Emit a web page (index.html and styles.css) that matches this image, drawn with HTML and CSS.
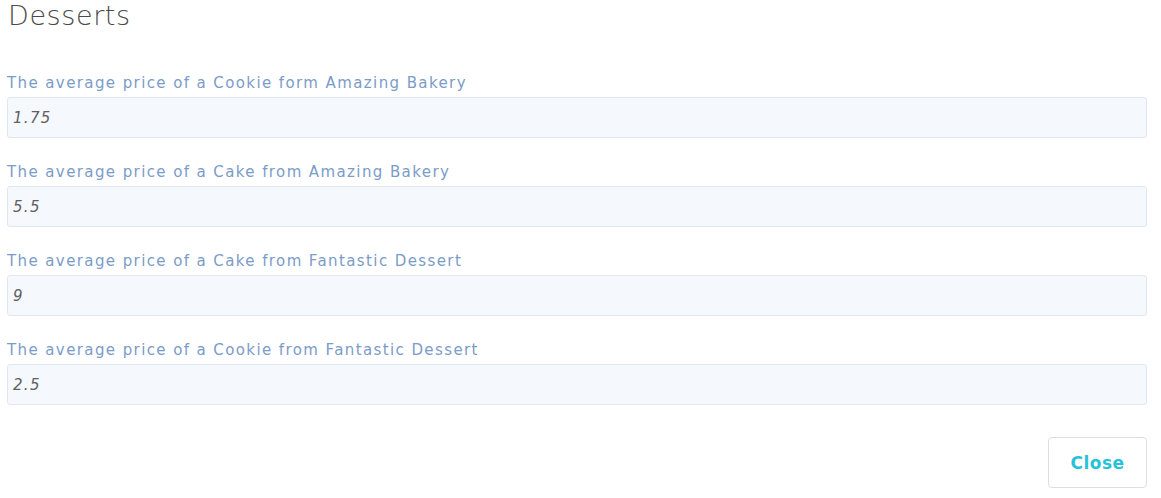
FILE: index.html
```html
<!DOCTYPE html>
<html>
<head>
<meta charset="utf-8">
<link rel="stylesheet" href="styles.css">
</head>
<body>
<div class="dialog">
  <h1 class="title">Desserts</h1>
  <div class="fields">
    <div class="field">
      <div class="label">The average price of a Cookie form Amazing Bakery</div>
      <div class="value">1.75</div>
    </div>
    <div class="field">
      <div class="label">The average price of a Cake from Amazing Bakery</div>
      <div class="value">5.5</div>
    </div>
    <div class="field">
      <div class="label">The average price of a Cake from Fantastic Dessert</div>
      <div class="value">9</div>
    </div>
    <div class="field">
      <div class="label">The average price of a Cookie from Fantastic Dessert</div>
      <div class="value">2.5</div>
    </div>
  </div>
  <div class="actions">
    <button class="btn-close">Close</button>
  </div>
</div>
</body>
</html>
```
FILE: styles.css
```css
html, body {
  margin: 0;
  padding: 0;
  background: #ffffff;
}
body {
  font-family: "DejaVu Sans", "Open Sans", sans-serif;
}
.dialog {
  padding: 0 14px 0 7px;
}
.title {
  margin: 0;
  padding: 0 0 0 1px;
  height: 73px;
  box-sizing: border-box;
  font-size: 27px;
  line-height: 32px;
  font-weight: 300;
  color: #4a4a4a;
  letter-spacing: 0.6px;
}
.fields {
  display: flex;
  flex-direction: column;
  gap: 24px;
}
.field {
  display: flex;
  flex-direction: column;
  gap: 4px;
}
.label {
  font-size: 15px;
  line-height: 20px;
  color: #7b9cc8;
  letter-spacing: 1.4px;
}
.value {
  height: 41px;
  box-sizing: border-box;
  background: #f5f9fd;
  border: 1px solid #e1e7ee;
  border-radius: 3px;
  padding: 0 5px;
  display: flex;
  align-items: center;
  font-size: 15px;
  font-style: italic;
  color: #606060;
  letter-spacing: 1.3px;
}
.actions {
  display: flex;
  justify-content: flex-end;
  margin-top: 32px;
}
.btn-close {
  width: 99px;
  height: 51px;
  background: #ffffff;
  border: 1px solid #dedede;
  border-radius: 4px;
  font-family: "DejaVu Sans", sans-serif;
  font-size: 17px;
  font-weight: bold;
  color: #27c2d9;
  letter-spacing: 0.5px;
  cursor: pointer;
}
```
